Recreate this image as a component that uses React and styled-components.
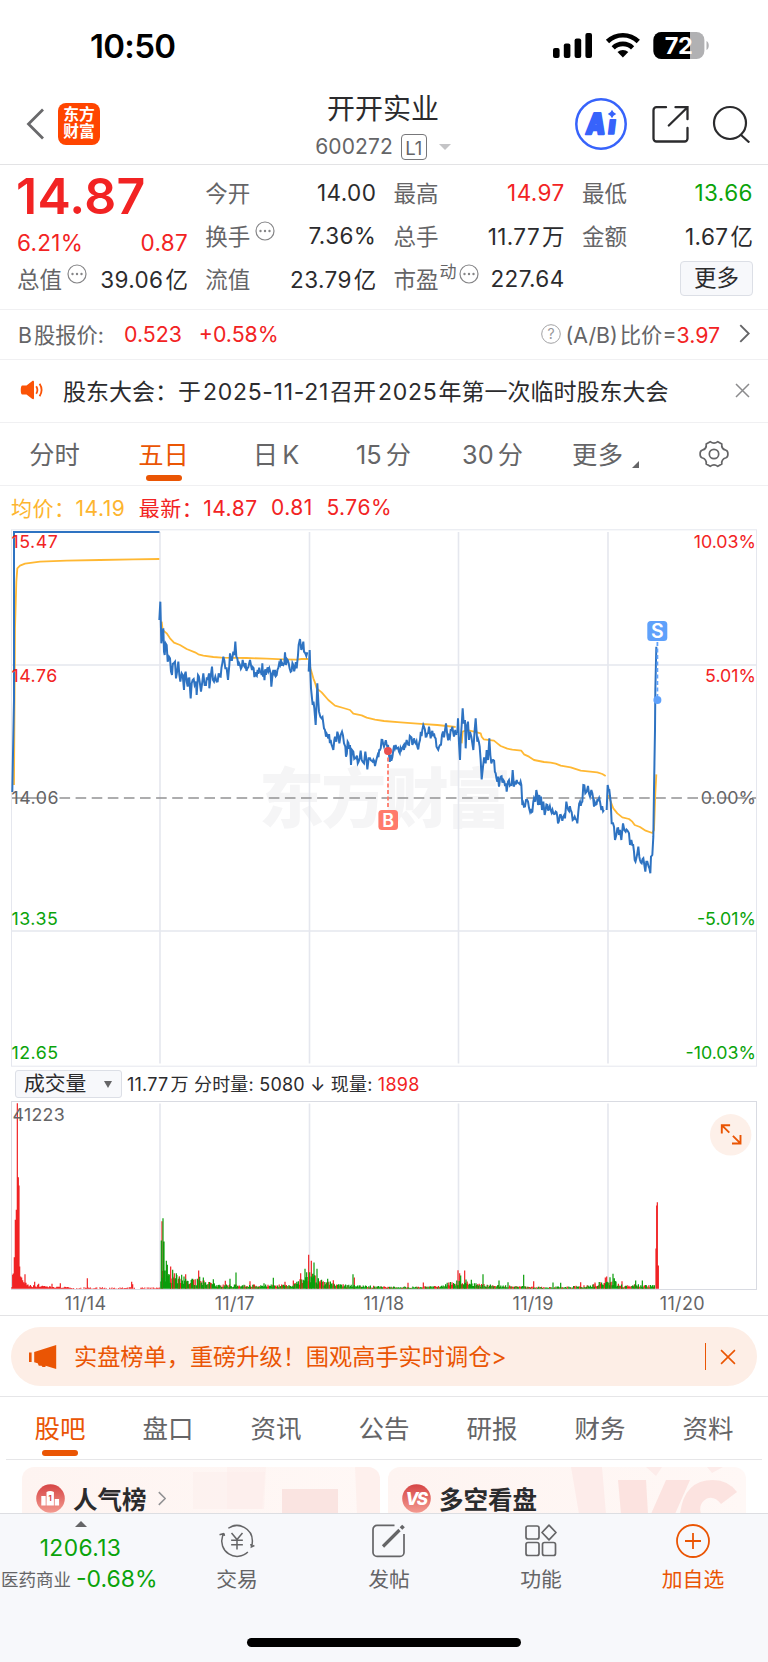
import React from 'react';
import styled, { createGlobalStyle } from 'styled-components';

const RED = '#f22323';
const GREEN = '#0aa30a';
const ORANGE = '#ea5504';
const DARK = '#2b2b2d';
const GREY = '#656567';
const GRID = '#e5e7ee';

/* ---------- chart data ---------- */

// turns 'x,y x,y' in thirds of a pixel into pixel points
const trace = (ox, oy, str) => str.trim().split(/\s+/).map(p => {
    const [x, y] = p.split(',').map(Number);
    return [ox + x / 3, oy + y / 3];
});

const toPath = points => points.map(([x, y], i) => `${i ? 'L' : 'M'}${x.toFixed(2)} ${y.toFixed(2)}`).join('');

const random = seed => () => {
    seed = (seed * 16807) % 2147483647;
    return seed / 2147483647;
};

const roughen = (points, amount) => {
    const rnd = random(77);
    const result = [];
    points.forEach(([x, y], i) => {
        const prev = points[i - 1];
        if (prev && x - prev[0] > 1.2) {
            const steps = Math.floor((x - prev[0]) / 0.7);
            for (let n = 1; n < steps; n++) {
                const t = n / steps;
                result.push([prev[0] + (x - prev[0]) * t, prev[1] + (y - prev[1]) * t + (rnd() - 0.5) * amount]);
            }
        }
        result.push([x, y]);
    });
    return result;
};

const priceDay1 = 'M12.3 792L14 700L14 532L159.5 532';

const priceDay2 = trace(0, 415, `
    478,615 481,560 484,685 488,650 490,640 492,710 494,720 497,685 500,690 503,740 507,725 510,730 513,770 516,780
    521,745 525,740 528,790 532,765 535,740 538,780 541,800 545,775 548,780 552,825 554,780 557,770 560,800 563,815 568,790
    572,850 575,805 578,795 584,810 588,800 590,840 594,780 599,800 603,830 607,800 610,775 614,810 618,810 623,795 627,775
    628,820 632,785 636,755 639,795 642,800 646,785 650,800 656,775 662,785 667,745 670,725 676,760 680,760 684,795 688,750
    690,715 693,735 696,735 700,710 703,720 706,680 709,725 712,730 720,750 728,735 734,755 742,760 750,735 756,765 768,780
    780,770 785,780 787,745 789,785 800,770 808,760 812,775 814,815 818,775 820,765 830,780 840,750 847,745 853,745 855,712
    858,750 866,745 872,770 880,750 890,760 894,720 896,690 900,672 904,705 906,700 910,680 912,710 916,715 922,712`);

const priceDay3 = [
    ...trace(0, 415, '926,770 929,705 931,770 933,820 936,850 938,870 943,880 947,930 950,860 952,805 955,860 957,890 961,905 965,910 970,925 972,940'),
    ...trace(0, 730, `
        975,0 978,20 985,25 992,30 997,50 1000,60 1003,30 1005,20 1009,35 1012,5 1018,40 1022,15 1026,5 1032,40 1036,50 1038,80
        1043,35 1050,45 1053,105 1056,60 1060,65 1068,85 1076,95 1082,62 1085,90 1088,95 1092,100 1096,65 1100,95 1102,118
        1106,85 1110,85 1118,95 1125,108 1129,90 1133,75 1140,60 1147,30 1152,50`),
    ...trace(384, 730, `
        3,40 10,50 15,75 22,92 28,60 35,45 40,55 45,65 52,60 60,60 65,45 68,30 75,45 80,20 85,45 90,25 95,40 100,50 108,30
        115,0 118,-15 125,20 130,10 135,-10 140,25 150,10 155,25 160,55 168,45 174,15 180,22 186,-20 190,15 195,18 200,0
        205,-10 210,20 214,0 218,15`),
];

const priceDay4 = trace(384, 730, `
    220,10 222,-35 225,40 228,90 230,30 233,-15 236,-65 239,-20 243,-30 245,55 248,-10 252,-25 255,30 258,5 262,20 265,40
    268,60 272,0 275,-35 278,10 280,35 287,50 290,90 293,148 297,110 300,85 305,100 308,60 312,90 316,25 319,75 322,100 328,90
    335,130 340,155 342,140 345,170 350,140 358,150 366,160 368,185 372,155 375,150 383,165 386,120 390,170 398,150 405,160
    412,165 415,225 420,230 426,210 432,215 438,245 445,245 448,215 450,205 454,215 457,180 462,225 466,195 468,225 471,200
    474,240 478,215 482,255 490,225 495,235 500,240 508,250 515,245 520,260 522,280 528,255 535,272 543,265 547,215 553,240
    560,240 566,270 572,260 578,270 580,280 583,245 588,215 595,215 598,165 604,190 608,185 612,168 618,200 622,180 625,190
    630,230 640,210 648,215 652,240 660,240`);

const priceDay5 = trace(384, 730, `
    668,240 671,165 674,180 676,180 680,215 683,280 687,280 690,290 693,330 697,315 700,295 705,315 708,300 712,330 715,300
    717,280 721,300 725,305 735,310 738,345 742,330 745,345 750,365 752,390 757,385 760,370 763,350 766,380 768,390 773,400
    778,385 781,405 784,425 787,395 790,395 794,410 799,430 801,380 805,375 808,320 810,180 813,0 814,-120 817,-250`);

const averages = [
    trace(0, 415, '42,1110 45,640 49,500 52,460 60,452 75,446 120,440 200,437 300,435 400,433 478,432'),
    trace(0, 415, `485,620 488,645 500,655 510,670 522,683 540,690 560,702 585,712 595,718 610,722 640,726 665,728 740,729
        800,731 850,733 890,734 905,732 925,732`),
    [
        ...trace(0, 415, '928,745 932,762 940,790 945,803 950,820 965,832 985,855 1005,872 1030,879 1050,885 1060,896 1085,901 1100,908 1125,914 1152,918'),
        ...trace(384, 415, '50,922 100,926 160,930 215,936'),
    ],
    trace(384, 730, `233,40 236,5 250,0 270,5 290,10 293,20 299,28 330,32 340,40 350,48 370,56 385,59 412,62 420,73 435,80
        450,90 480,96 500,98 515,101 530,107 560,112 590,122 640,127 655,132 665,138`),
    trace(384, 730, '674,195 680,215 688,235 700,250 715,262 735,267 745,275 752,285 768,291 785,302 805,309 810,300 814,190 817,133'),
];

// [x, height, up] of the bars that stand out, also in thirds
const peaks = [
    [38, 42, 1], [40, 46, 1], [43, 95, 1], [46, 207, 1], [49, 237, 1], [52, 557, 1], [55, 335, 1], [57, 310, 1], [59, 67, 1], [62, 37, 1],
    [65, 34, 1], [68, 26, 1], [71, 20, 1], [75, 44, 1], [78, 18, 1], [82, 12, 1], [104, 21, 1], [113, 12, 1], [116, 15, 1], [156, 15, 1],
    [181, 17, 1], [262, 32, 1], [395, 21, 1], [398, 14, 1],
    [484, 145, 0], [486, 203, 1], [489, 212, 0], [492, 142, 0], [495, 55, 0], [499, 84, 0], [502, 72, 0], [505, 40, 0], [508, 42, 0],
    [512, 67, 1], [518, 57, 0], [523, 47, 1], [529, 47, 0], [538, 38, 1], [545, 42, 0], [557, 44, 1], [578, 30, 0], [592, 30, 0], [596, 55, 1],
    [599, 36, 0], [610, 34, 0], [640, 29, 0], [676, 24, 1], [690, 30, 0], [708, 49, 0], [750, 23, 1], [792, 17, 0], [820, 33, 0],
    [855, 21, 1], [880, 25, 1], [902, 47, 1], [915, 60, 0], [920, 50, 0], [926, 102, 1], [929, 50, 0], [934, 84, 1], [938, 45, 0], [942, 79, 0],
    [951, 60, 0], [983, 30, 0], [1000, 26, 1], [1059, 44, 0], [1063, 34, 1],
    [1224, 18, 1], [1270, 19, 1], [1374, 56, 1], [1379, 47, 1], [1382, 40, 0], [1394, 55, 1], [1398, 28, 0], [1414, 27, 0], [1449, 44, 0],
    [1497, 25, 0], [1524, 20, 0], [1571, 42, 0], [1601, 23, 1], [1659, 19, 0], [1682, 18, 0], [1742, 20, 1], [1785, 19, 1], [1816, 34, 1],
    [1820, 37, 1], [1830, 35, 0], [1839, 45, 0], [1843, 32, 0], [1866, 23, 1], [1907, 25, 0], [1927, 25, 0],
    [1968, 121, 1], [1970, 250, 1], [1972, 260, 1], [1975, 70, 1],
];

// quiet trading between the peaks: [x, typical height]
const calm = [[36, 14], [70, 14], [110, 9], [180, 6], [240, 4], [480, 4], [484, 50], [530, 38], [600, 26], [660, 12], [880, 12], [910, 34],
    [950, 38], [975, 24], [1020, 14], [1080, 10], [1200, 6], [1320, 8], [1350, 20], [1385, 26], [1420, 18], [1460, 12], [1520, 10], [1640, 5],
    [1760, 10], [1810, 22], [1845, 22], [1870, 10], [1900, 14], [1965, 10]];

const calmAt = x => {
    const i = Math.max(1, calm.findIndex(c => c[0] >= x));
    const [x0, h0] = calm[i - 1];
    const [x1, h1] = calm[i];
    return h0 + (h1 - h0) * (x - x0) / (x1 - x0);
};

const makeBars = () => {
    const rnd = random(4242);
    const bars = [];
    for (let x = 36; x < 1965; x += 2.4) {
        const height = calmAt(x) * (0.35 + rnd() * 0.75);
        const up = x < 480 ? 1 : rnd() < 0.38 ? 1 : 0;
        if (x > 215 && x < 480 && rnd() < 0.4) continue;
        bars.push([x, height, up]);
    }
    return [...bars, ...peaks];
};

const barPath = up => makeBars()
    .filter(bar => bar[2] === up)
    .map(([x, h]) => `M${(x / 3).toFixed(2)} 1288.8v${(-h / 3).toFixed(2)}`)
    .join('');

/* ---------- icons ---------- */

const StatusIcons = () => (
    <svg width="158" height="30" viewBox="552 31 158 30">
        <rect x="553" y="48" width="6.6" height="10" rx="2" />
        <rect x="563.8" y="43.6" width="6.6" height="14.4" rx="2" />
        <rect x="574.6" y="38.4" width="6.6" height="19.6" rx="2" />
        <rect x="585.4" y="33" width="6.6" height="25" rx="2" />
        <g fill="none" stroke="#000" strokeWidth="4.6">
            <path d="M607.5 41.5a22 22 0 0 1 30.8 0" />
            <path d="M613.2 47.8a14 14 0 0 1 19.4 0" />
        </g>
        <path d="M622.9 57.4l-5.4-5.3a8 8 0 0 1 10.8 0z" />
        <rect x="653.4" y="32" width="51" height="27" rx="8" fill="#b1b1b3" />
        <path d="M690 32h-28.6a8 8 0 0 0-8 8v11a8 8 0 0 0 8 8h28.6z" />
        <path d="M706.5 41v9c3-1.2 3-7.8 0-9z" fill="#b1b1b3" />
        <text x="678.5" y="54" fill="#fff" textAnchor="middle" fontSize="23.5" fontWeight="700" letterSpacing="-0.4">72</text>
    </svg>
);

const BackIcon = () => (
    <svg width="18" height="32" viewBox="0 0 18 32" fill="none" stroke="#69696b" strokeWidth="2.8">
        <path d="M17 1.5L2.5 16L17 30.5" />
    </svg>
);

const AiIcon = () => (
    <svg width="52" height="52" viewBox="575 98 52 52">
        <circle cx="601" cy="124" r="24.7" fill="none" stroke="#3763fb" strokeWidth="2.5" />
        <g transform="translate(585.2 134) skewX(-7)" fill="#3763fb" stroke="#3763fb" strokeLinejoin="round">
            <text strokeWidth="2.4" fontSize="28.5" fontWeight="900" textLength="19" lengthAdjust="spacingAndGlyphs">A</text>
            <text x="22" strokeWidth="1.6" fontSize="26" fontWeight="900">ı</text>
        </g>
        <path d="M612 109.8q1 3 4.2 4.2q-3.2 1.2-4.2 4.2q-1-3-4.2-4.2q3.2-1.2 4.2-4.2z" fill="#3763fb" />
    </svg>
);

const ShareIcon = () => (
    <svg width="38" height="38" viewBox="650 105 38 38" fill="none" stroke={DARK} strokeWidth="2.3" strokeLinecap="round">
        <path d="M665 107.2h-9.5a3 3 0 0 0-3 3v28.3a3 3 0 0 0 3 3h28a3 3 0 0 0 3-3v-10.5" />
        <path d="M674.5 107.2h12v12M686 107.7L667.8 125.5" />
    </svg>
);

const SearchIcon = () => (
    <svg width="40" height="38" viewBox="712 104 40 38" fill="none" stroke={DARK} strokeWidth="2.2">
        <circle cx="730" cy="122" r="16" />
        <path d="M740.5 133.5L749.3 141.5" />
    </svg>
);

const DotsIcon = () => (
    <svg width="20" height="20" viewBox="0 0 20 20">
        <circle cx="10" cy="10" r="9" fill="none" stroke="#858587" strokeWidth="1.2" />
        <g fill="#858587"><circle cx="5.5" cy="10" r="1.2" /><circle cx="10" cy="10" r="1.2" /><circle cx="14.5" cy="10" r="1.2" /></g>
    </svg>
);

const HelpIcon = () => (
    <svg width="20" height="20" viewBox="0 0 20 20">
        <circle cx="10" cy="10" r="9.3" fill="none" stroke="#a2a2a4" strokeWidth="1" />
        <text x="10" y="15" textAnchor="middle" fontSize="14" fill="#98989a">?</text>
    </svg>
);

const ArrowRight = ({ w, h, color, weight }) => (
    <svg width={w} height={h} viewBox="0 0 10 18" fill="none" stroke={color} strokeWidth={weight}>
        <path d="M1 1L9 9L1 17" />
    </svg>
);

const CloseIcon = ({ color, size }) => (
    <svg width={size} height={size} viewBox="0 0 15 15" fill="none" stroke={color} strokeWidth="1.5">
        <path d="M1 1L14 14M14 1L1 14" />
    </svg>
);

const SpeakerIcon = () => (
    <svg width="24" height="20" viewBox="0 0 24 20">
        <path d="M2 5.5h4.5L12 1.2c1.2-.8 2-.3 2 .9v15.8c0 1.2-.8 1.7-2 .9L6.500 14.500H2c-1.600 0-1.600-9 0-9z" fill="#fb5306" />
        <path d="M16.2 6.2q2.4 3.8 0 7.6M19.6 3.8q4 6.2 0 12.4" fill="none" stroke="#fb5306" strokeWidth="1.8" />
    </svg>
);

const GearIcon = () => (
    <svg width="30" height="28" viewBox="0 0 30 28" fill="none" stroke={GREY} strokeWidth="1.7" strokeLinejoin="round">
        <path d="M11.2 1.7Q15 4.7 18.8 1.7L22.8 4Q22.1 8.8 27 10.3Q28.9 11 28.9 14Q28.9 17 27 17.7Q22.1 19.2 22.8 24L18.8 26.3Q15 23.3 11.2 26.3L7.2 24Q7.9 19.2 3 17.7Q1.1 17 1.1 14Q1.1 11 3 10.3Q7.9 8.8 7.2 4Z" />
        <circle cx="15" cy="14" r="4.7" />
    </svg>
);

const HornIcon = () => (
    <svg width="28" height="24" viewBox="0 0 28 24" fill={ORANGE}>
        <rect x="0" y="7.5" width="2.6" height="9.5" />
        <path d="M5.2 7L27.2 0V24L16.5 20.8V22h-3l-1-1.3H9.8L8.7 18.3L5.2 17.2z" />
    </svg>
);

const RankIcon = () => (
    <svg width="29" height="29" viewBox="0 0 29 29">
        <defs>
            <linearGradient id="badge" x1="0" y1="0" x2="0" y2="1">
                <stop offset="0" stopColor="#d64545" /><stop offset="1" stopColor="#f39a90" />
            </linearGradient>
        </defs>
        <circle cx="14.5" cy="14.5" r="14.3" fill="url(#badge)" />
        <path d="M5.3 12h4.4v9.5H5.3zM10.5 8q3.7-2 7.4 0v13.5h-7.4zM18.7 15h4.4v6.5h-4.4z" fill="#fff" />
        <text x="14.2" y="16.5" fontSize="7.5" fontWeight="700" textAnchor="middle" fill="#d64545">1</text>
    </svg>
);

const VsIcon = () => (
    <svg width="29" height="29" viewBox="0 0 29 29">
        <circle cx="14.5" cy="14.5" r="14.3" fill="url(#badge)" />
        <text x="13.8" y="20.5" fontSize="17" fontWeight="800" fontStyle="italic" textAnchor="middle" letterSpacing="-1.8" fill="#fff">VS</text>
    </svg>
);

const TradeIcon = () => (
    <svg width="40" height="36" viewBox="0 0 40 36" fill="none" stroke={GREY} strokeWidth="1.6">
        <path d="M10.8 4.5A16.3 16.3 0 0 1 36.3 18q0 3-.9 6.2l3-1.4M35.4 24.2l-.8-3.2" />
        <path d="M31.5 29.7A16.3 16.3 0 0 1 4.8 12.5l.9-2.3M1.5 11.3l4.700-1.300M6.2 10l.5 2.5" />
        <path d="M14.2 9.5l5.8 7l5.8-7M20 16.5V27M13.8 17.3h12.4M13.8 22h12.4" />
    </svg>
);

const PostIcon = () => (
    <svg width="34" height="34" viewBox="0 0 34 34" fill="none" stroke={GREY} strokeWidth="1.7">
        <path d="M22.5 1.4H5a4 4 0 0 0-4 4v23a4 4 0 0 0 4 4h23a4 4 0 0 0 4-4V10" />
        <path d="M11 22.5L27.5 6" strokeWidth="3.2" />
        <path d="M29 4.5L31.500 2" strokeWidth="3.8" />
    </svg>
);

const FeatureIcon = () => (
    <svg width="32" height="34" viewBox="0 0 32 34" fill="none" stroke={GREY} strokeWidth="1.7" strokeLinejoin="round">
        <rect x="1" y="2" width="13" height="13" rx="2" />
        <rect x="1" y="18.500" width="13" height="13" rx="2" />
        <rect x="17.500" y="18.500" width="13" height="13" rx="2" />
        <path d="M24 1.200l7 7.300l-7 7.300l-7-7.300z" />
    </svg>
);

const AddIcon = () => (
    <svg width="34" height="34" viewBox="0 0 34 34" fill="none" stroke={ORANGE} strokeWidth="1.8">
        <circle cx="17" cy="17" r="16" />
        <path d="M17 9v16M9 17h16" />
    </svg>
);

/* ---------- charts ---------- */

const columns = [160, 309.5, 458.5, 608];

const axis = [
    { y: 548, left: '15.47', right: '10.03%', color: RED },
    { y: 682, left: '14.76', right: '5.01%', color: RED },
    { y: 804, left: '14.06', right: '0.00%', color: GREY },
    { y: 925.3, left: '13.35', right: '-5.01%', color: GREEN },
    { y: 1059.3, left: '12.65', right: '-10.03%', color: GREEN },
];

const PriceChart = () => (
    <ChartSvg height="538" viewBox="0 529 768 538">
        <text x="259" y="822" fontSize="65" fontWeight="800" fill="#f5f5f6" textLength="252">东方财富</text>
        <g stroke={GRID} strokeWidth="1.6" fill="none">
            <rect x="11.5" y="529.8" width="745" height="536.4" strokeWidth="1" />
            <path d="M12 665H756M12 931H756" />
            {columns.map(x => <path key={x} d={`M${x} 532V1063.5`} />)}
        </g>
        <path d="M12 798H46" stroke="#8f8f91" strokeWidth="1.5" />
        <path d="M59.5 798H756" stroke="#929294" strokeWidth="1.7" strokeDasharray="10.6 5.5" />
        <g fill="none" stroke="#ffb833" strokeWidth="1.8" strokeLinejoin="round">
            {averages.map((line, i) => <path key={i} d={toPath(line)} />)}
        </g>
        <g fill="none" stroke="#2e73c2" strokeWidth="2">
            <path d={priceDay1} />
            <path d={toPath(roughen(priceDay2, 11))} />
            <path d={toPath(roughen(priceDay3, 10))} />
            <path d={toPath(roughen(priceDay4, 8))} />
            <path d={toPath(roughen(priceDay5, 7))} />
        </g>
        {axis.map(({ y, left, right, color }) => (
            <g key={left} fill={color} fontSize="17.8">
                <text x="11.5" y={y} letterSpacing="0.5">{left}</text>
                <text x="756" y={y} textAnchor="end">{right}</text>
            </g>
        ))}
        <path d="M388 751V809" stroke="#ff7a6b" strokeWidth="1.8" strokeDasharray="4 2.5" />
        <circle cx="388" cy="751" r="4" fill="#e9504f" />
        <rect x="378.4" y="810" width="19.6" height="20" rx="3.5" fill="#ff7a6b" />
        <text x="388.2" y="826.5" textAnchor="middle" fontSize="18" fontWeight="600" fill="#fff">B</text>
        <path d="M657.4 642V696" stroke="#5fa1fb" strokeWidth="1.8" strokeDasharray="4 2.5" />
        <circle cx="657.4" cy="700" r="4" fill="#5fa1fb" />
        <rect x="647.3" y="621" width="20" height="20" rx="3.5" fill="#5fa1fb" />
        <text x="657.4" y="638" textAnchor="middle" fontSize="19.5" fontWeight="600" fill="#fff">S</text>
    </ChartSvg>
);

const VolumeChart = () => (
    <ChartSvg height="189" viewBox="0 1101 768 189">
        <g stroke={GRID} strokeWidth="1.6" fill="none">
            <rect x="11.5" y="1101.5" width="745" height="188" stroke="#d9dbe2" strokeWidth="1" />
            {columns.map(x => <path key={x} d={`M${x} 1103.5V1289`} />)}
        </g>
        <path d={barPath(1)} stroke="#f02224" strokeWidth="1.2" />
        <path d={barPath(0)} stroke="#0a9d0a" strokeWidth="1.2" />
        <text x="12.500" y="1121" fontSize="17.8" letterSpacing="0.3" fill={GREY}>41223</text>
        <circle cx="730.7" cy="1134.8" r="20.7" fill="#fdf0e9" />
        <g fill="none" stroke={ORANGE} strokeWidth="1.9">
            <path d="M721.8 1133.5v-8.3h8.3M722 1125.4l7.3 7.3" />
            <path d="M740.5 1135v8.5h-8.5M740.2 1143.2l-7.300-7.300" />
        </g>
    </ChartSvg>
);

/* ---------- page ---------- */

const periods = [
    { label: '分时', width: 109 },
    { label: '五日', width: 109, active: true },
    { label: '日 K', width: 116 },
    { label: '15 分', width: 99 },
    { label: '30 分', width: 119 },
];

const sections = ['股吧', '盘口', '资讯', '公告', '研报', '财务', '资料'];

const quotes = [
    [
        { label: '今开', value: '14.00' },
        { label: '最高', value: '14.97', color: RED },
        { label: '最低', value: '13.66', color: GREEN },
    ],
    [
        { label: '换手', value: '7.36%', more: true },
        { label: '总手', value: '11.77', unit: '万' },
        { label: '金额', value: '1.67', unit: '亿' },
    ],
];

const Cell = ({ label, sup, value, unit, color, more }) => (
    <QuoteCell>
        <QuoteLabel>{label}{sup && <Sup>{sup}</Sup>}{more && <Raised $tight={!!sup}><DotsIcon /></Raised>}</QuoteLabel>
        <Value $color={color}>{value}{unit && <Unit>{unit}</Unit>}</Value>
    </QuoteCell>
);

const App = () => (
    <Page>
        <GlobalStyle />
        <StatusBar>
            <Clock>10:50</Clock>
            <StatusIcons />
        </StatusBar>

        <Header>
            <HeaderSide>
                <BackIcon />
                <Logo><span>东方</span><span>财富</span></Logo>
            </HeaderSide>
            <Stock>
                <StockName>开开实业</StockName>
                <StockCode>600272<Level>L1</Level><Caret /></StockCode>
            </Stock>
            <HeaderSide $end>
                <AiIcon />
                <ShareIcon />
                <SearchIcon />
            </HeaderSide>
        </Header>

        <Quote>
            <Latest>
                <Price>14.87</Price>
                <Change><span>6.21%</span><span>0.87</span></Change>
            </Latest>
            {quotes.map(row => row.map(cell => <Cell key={cell.label} {...cell} />))}
            <Cell label="总值" value="39.06" unit="亿" more />
            <Cell label="流值" value="23.79" unit="亿" />
            <Cell label="市盈" sup="动" value="227.64" more />
            <QuoteCell $end><MoreButton>更多</MoreButton></QuoteCell>
        </Quote>

        <ShareB>
            <ShareBLabel>B<Gap $w={2} />股报价:</ShareBLabel>
            <ShareBValue>0.523</ShareBValue>
            <ShareBValue>+0.58%</ShareBValue>
            <Ratio><HelpIcon /><span>(A/B)<Gap $w={2} />比价=<b>3.97</b></span></Ratio>
            <ArrowRight w={11} h={19} color={GREY} weight={1.8} />
        </ShareB>

        <Notice>
            <SpeakerIcon />
            <NoticeText>
                股东大会：于<Num>2025-11-21</Num>召开<Num>2025</Num>年第一次临时股东大会
            </NoticeText>
            <CloseIcon color="#8b8b8d" size={15} />
        </Notice>

        <Periods>
            {periods.map(({ label, width, active }) => (
                <Period key={label} $width={width} $active={active}>{label}</Period>
            ))}
            <MorePeriods>更多<Corner /></MorePeriods>
            <GearIcon />
        </Periods>

        <Legend>
            <LegendItem $color="#fdb52f">均价：14.19</LegendItem>
            <LegendItem $color={RED}>最新：14.87</LegendItem>
            <LegendItem $color={RED}>0.81</LegendItem>
            <LegendItem $color={RED}>5.76%</LegendItem>
        </Legend>

        <PriceChart />

        <VolumeHead>
            <VolumeSelect>成交量<Triangle /></VolumeSelect>
            <VolumeText>11.77<Gap $w={2} />万 分时量: 5080 ↓ 现量: <b>1898</b></VolumeText>
        </VolumeHead>

        <VolumeChart />

        <Dates>
            {['11/14', '11/17', '11/18', '11/19', '11/20'].map(day => <span key={day}>{day}</span>)}
        </Dates>

        <BannerWrap>
            <Banner>
                <HornIcon />
                <BannerText>实盘榜单，重磅升级！围观高手实时调仓&gt;</BannerText>
                <BannerLine />
                <CloseIcon color={ORANGE} size={16} />
            </Banner>
        </BannerWrap>

        <Sections>
            {sections.map((name, i) => <SectionTab key={name} $active={i === 0}>{name}</SectionTab>)}
        </Sections>

        <Cards>
            <Card>
                <CardArt viewBox="0 0 358 47">
                    <path d="M171 5h72l-3 37h-69z" fill="#fceeec" opacity=".5" />
                    <path d="M205 0h39l-2 42h-37z" fill="#fdebe8" opacity=".4" />
                    <path d="M333 0h25v47h-23z" fill="#fdebe8" opacity=".6" />
                    <path d="M260 22h56v25h-56z" fill="#f9dedc" opacity=".8" />
                </CardArt>
                <RankIcon />
                <CardTitle>人气榜</CardTitle>
                <ArrowRight w={8} h={15} color="#929294" weight={1.9} />
            </Card>
            <Card>
                <CardArt viewBox="0 0 358 47">
                    <path d="M183 0h31l4 47h-27z" fill="#fdecea" />
                    <path d="M230 13h28l2 34h-27zM278 13h24l-15 34h-24z" fill="#fbdfdc" opacity=".85" />
                    <path d="M258 0h16l-6 9zM335 0h-16l5 6z" fill="#fdecea" />
                    <path d="M292 47q4-34 33-34q15 0 24 12l-16 12q-7-9-15-5q-8 5-5 15z" fill="#fbdfdc" opacity=".85" />
                </CardArt>
                <VsIcon />
                <CardTitle>多空看盘</CardTitle>
            </Card>
        </Cards>

        <BottomBar>
            <Nav>
                <IndexBox>
                    <UpMark />
                    <IndexValue>1206.13</IndexValue>
                    <IndexRow>医药商业<b>-0.68%</b></IndexRow>
                </IndexBox>
                <NavItem><TradeIcon />交易</NavItem>
                <NavItem><PostIcon />发帖</NavItem>
                <NavItem><FeatureIcon />功能</NavItem>
                <NavItem $active><AddIcon />加自选</NavItem>
            </Nav>
            <HomeIndicator />
        </BottomBar>
    </Page>
);

export default App;

const GlobalStyle = createGlobalStyle`
    * { box-sizing: border-box; }
    body {
        margin: 0;
        background: #fff;
        font-family: Inter, 'Noto Sans CJK SC', sans-serif;
    }
    svg { display: block; flex: none; }
`;

const Page = styled.div`
    width: 768px;
    height: 1662px;
    overflow: hidden;
    display: flex;
    flex-direction: column;
    color: ${DARK};
    background: #fff;
    white-space: nowrap;
    > * { flex: none; }
`;

const Gap = styled.span`
    display: inline-block;
    width: ${({ $w }) => $w}px;
`;

const Num = styled.span`
    margin: 0 1px 0 2px;
    letter-spacing: 0.7px;
`;

const StatusBar = styled.div`
    height: 80px;
    padding: 12px 58px 0 90px;
    display: flex;
    align-items: center;
    justify-content: space-between;
    color: #000;
`;

const Clock = styled.span`
    font-size: 33px;
    font-weight: 600;
    letter-spacing: -0.7px;
`;

const Header = styled.div`
    height: 85px;
    padding: 3px 16px 0 26px;
    display: grid;
    grid-template-columns: 289px 136px 1fr;
    border-bottom: 1px solid #e3e3e5;
    font-size: 21px;
`;

const HeaderSide = styled.div`
    display: flex;
    align-items: center;
    gap: ${({ $end }) => ($end ? 23.5 : 14)}px;
    justify-content: ${({ $end }) => ($end ? 'flex-end' : 'flex-start')};
`;

const Logo = styled.div`
    width: 42px;
    height: 42px;
    padding-top: 3px;
    border-radius: 8px;
    background: #ff4500;
    color: #fff;
    display: flex;
    flex-direction: column;
    align-items: center;
    font-size: 15.8px;
    font-weight: 700;
    line-height: 17.5px;
`;

const Stock = styled.div`
    display: flex;
    flex-direction: column;
    align-items: center;
`;

const StockName = styled.div`
    margin-top: 9px;
    font-size: 28px;
    line-height: 34px;
`;

const StockCode = styled.div`
    display: flex;
    align-items: center;
    color: ${GREY};
    font-size: 21px;
    line-height: 26px;
    margin-top: 8px;
    letter-spacing: 0.1px;
`;

const Level = styled.span`
    width: 26px;
    height: 26px;
    margin-left: 8px;
    border: 1px solid #77777a;
    border-radius: 4px;
    font-size: 18.5px;
    line-height: 26px;
    text-align: center;
`;

const Caret = styled.span`
    margin-left: 12px;
    border: 6.5px solid transparent;
    border-top-color: #c4c4c6;
    border-bottom: 0;
`;

const Quote = styled.div`
    height: 145px;
    padding: 5.5px 15px 0 17px;
    display: grid;
    grid-template-columns: repeat(4, 171px);
    grid-auto-rows: 43px;
    column-gap: 17.3px;
    border-bottom: 1px solid #f0f0f2;
`;

const Latest = styled.div`
    grid-row: span 2;
    color: ${RED};
`;

const Price = styled.div`
    margin: 0 0 0 -1px;
    font-size: 50px;
    font-weight: 600;
    line-height: 50px;
    letter-spacing: 0.3px;
`;

const Change = styled.div`
    display: flex;
    justify-content: space-between;
    font-size: 22.5px;
    line-height: 43px;
    letter-spacing: 0.3px;
`;

const QuoteCell = styled.div`
    display: flex;
    align-items: center;
    justify-content: ${({ $end }) => ($end ? 'flex-end' : 'space-between')};
    font-size: 22.5px;
`;

const QuoteLabel = styled.span`
    display: flex;
    color: ${GREY};
`;

const Raised = styled.span`
    margin: 2px 0 0 ${({ $tight }) => ($tight ? 2 : 5)}px;
`;

const Sup = styled.span`
    margin: -4px 0 0 1px;
    font-size: 17px;
`;

const Value = styled.span`
    color: ${({ $color }) => $color || DARK};
    letter-spacing: 0.4px;
`;

const Unit = styled.span`
    margin-left: 2px;
    letter-spacing: 0;
`;

const MoreButton = styled.div`
    width: 73px;
    height: 35px;
    border: 1px solid #dcdfe6;
    border-radius: 4px;
    background: #f7f8fb;
    text-align: center;
    font-size: 22.5px;
    line-height: 32px;
`;

const ShareB = styled.div`
    height: 50px;
    padding: 0 18px 2px 18px;
    display: flex;
    align-items: center;
    border-bottom: 1px solid #f0f0f2;
    font-size: 21.3px;
`;

const ShareBLabel = styled.span`
    width: 106px;
    color: ${GREY};
`;

const ShareBValue = styled.span`
    margin-right: 17px;
    color: ${RED};
`;

const Ratio = styled.span`
    display: flex;
    align-items: center;
    gap: 5px;
    margin: 0 19px 0 auto;
    color: ${GREY};
    b {
        font-weight: 400;
        color: ${RED};
    }
`;

const Notice = styled.div`
    height: 63px;
    padding: 0 18px 2px 20px;
    display: flex;
    align-items: center;
    border-bottom: 1px solid #f0f0f2;
`;

const NoticeText = styled.span`
    flex: 1;
    margin-left: 19px;
    font-size: 23px;
`;

const Periods = styled.div`
    height: 63px;
    display: flex;
    align-items: center;
    border-bottom: 1px solid #f0f0f2;
    color: ${GREY};
    font-size: 25.3px;
    padding-right: 39px;
`;

const Period = styled.div`
    width: ${({ $width }) => $width}px;
    line-height: 61px;
    text-align: center;
    word-spacing: -3px;
    position: relative;
    color: ${({ $active }) => ($active ? ORANGE : 'inherit')};
    &::after {
        content: '';
        display: ${({ $active }) => ($active ? 'block' : 'none')};
        position: absolute;
        left: calc(50% - 18px);
        bottom: 4px;
        width: 36px;
        height: 6px;
        border-radius: 3px;
        background: ${ORANGE};
    }
`;

const MorePeriods = styled.div`
    display: flex;
    align-items: center;
    margin: 0 auto 0 20px;
    line-height: 61px;
    letter-spacing: 0.5px;
`;

const Corner = styled.span`
    margin: 20px 0 0 8px;
    border-left: 7px solid transparent;
    border-bottom: 7px solid ${GREY};
`;

const Legend = styled.div`
    height: 43px;
    padding: 0 0 1px 11px;
    display: flex;
    align-items: center;
    gap: 13.5px;
    font-size: 21px;
    letter-spacing: 0.5px;
`;

const LegendItem = styled.span`
    color: ${({ $color }) => $color};
`;

const ChartSvg = styled.svg`
    width: 768px;
`;

const VolumeHead = styled.div`
    height: 34px;
    padding-left: 15px;
    display: flex;
    align-items: center;
    gap: 5px;
`;

const VolumeSelect = styled.div`
    width: 107px;
    height: 28px;
    padding: 0 9px 0 8px;
    border: 1px solid #dcdfe6;
    border-radius: 3px;
    background: #f7f8fb;
    display: flex;
    align-items: center;
    justify-content: space-between;
    font-size: 20.8px;
    line-height: 26px;
`;

const Triangle = styled.span`
    border: 4px solid transparent;
    border-top: 7px solid ${GREY};
    border-bottom: 0;
`;

const VolumeText = styled.span`
    margin-top: -2px;
    font-size: 18px;
    letter-spacing: 0.22px;
    b {
        font-weight: 400;
        color: ${RED};
    }
`;

const Dates = styled.div`
    height: 26px;
    padding: 0 11px;
    display: grid;
    grid-template-columns: repeat(5, 149.2px);
    border-bottom: 1px solid #e3e3e5;
    color: ${GREY};
    font-size: 18px;
    line-height: 27px;
    letter-spacing: 0.3px;
    text-align: center;
`;

const BannerWrap = styled.div`
    height: 81px;
    padding: 11px 11px 0;
    border-bottom: 1px solid #e6e6e8;
`;

const Banner = styled.div`
    height: 59px;
    padding: 0 21px 0 18px;
    border-radius: 30px;
    background: #fdeee6;
    color: ${ORANGE};
    display: flex;
    align-items: center;
`;

const BannerText = styled.span`
    flex: 1;
    margin: -3px 0 0 17px;
    font-size: 23.2px;
`;

const BannerLine = styled.span`
    width: 1px;
    height: 27px;
    margin-right: 14px;
    background: ${ORANGE};
`;

const Sections = styled.div`
    height: 63px;
    margin: 0 6px;
    display: grid;
    grid-template-columns: repeat(7, 1fr);
    border-bottom: 1px solid #e6e6e8;
    font-size: 25.5px;
    line-height: 63px;
    text-align: center;
`;

const SectionTab = styled.div`
    height: 62px;
    position: relative;
    color: ${({ $active }) => ($active ? ORANGE : GREY)};
    &::after {
        content: '';
        display: ${({ $active }) => ($active ? 'block' : 'none')};
        position: absolute;
        left: calc(50% - 18px);
        bottom: 3px;
        width: 36px;
        height: 6px;
        border-radius: 3px;
        background: ${ORANGE};
    }
`;

const Cards = styled.div`
    height: 53px;
    padding: 7px 22px 0;
    display: grid;
    grid-template-columns: 358px 358px;
    column-gap: 8px;
    overflow: hidden;
`;

const Card = styled.div`
    height: 80px;
    padding: 17px 14px 0;
    border-radius: 12px;
    background: linear-gradient(to right, #fef4f1, #fff8f6);
    overflow: hidden;
    position: relative;
    display: flex;
    > svg { position: relative; }
    > svg:last-child { margin: 7px 0 0 11px; }
`;

const CardArt = styled.svg`
    && {
        position: absolute;
        top: 0;
        left: 0;
        width: 358px;
        height: 47px;
    }
`;

const CardTitle = styled.span`
    position: relative;
    margin-left: 8px;
    font-size: 24.5px;
    font-weight: 600;
    line-height: 32px;
`;

const BottomBar = styled.div`
    height: 149px;
    border-top: 1px solid #dddee2;
    background: #f7f8fb;
    display: flex;
    flex-direction: column;
    align-items: center;
`;

const Nav = styled.div`
    width: 768px;
    height: 124px;
    display: grid;
    grid-template-columns: 161px repeat(4, 152px);
`;

const IndexBox = styled.div`
    display: flex;
    flex-direction: column;
    align-items: center;
    color: ${GREEN};
    font-size: 22.8px;
`;

const UpMark = styled.span`
    margin-top: 7px;
    border: 6px solid transparent;
    border-bottom-color: ${GREY};
    border-top: 0;
`;

const IndexValue = styled.div`
    margin-top: 5px;
    line-height: 32px;
    letter-spacing: 0.4px;
`;

const IndexRow = styled.div`
    width: 161px;
    padding-left: 1px;
    display: flex;
    align-items: center;
    gap: 5px;
    line-height: 31px;
    font-size: 17.5px;
    color: ${GREY};
    b {
        font-size: 23px;
        font-weight: 400;
        color: ${GREEN};
    }
`;

const NavItem = styled.div`
    padding-top: 10px;
    display: flex;
    flex-direction: column;
    align-items: center;
    font-size: 20.8px;
    line-height: 30px;
    color: ${({ $active }) => ($active ? ORANGE : GREY)};
    svg {
        height: 34px;
        margin-bottom: 7px;
    }
`;

const HomeIndicator = styled.div`
    width: 274px;
    height: 9px;
    border-radius: 5px;
    background: #000;
`;
